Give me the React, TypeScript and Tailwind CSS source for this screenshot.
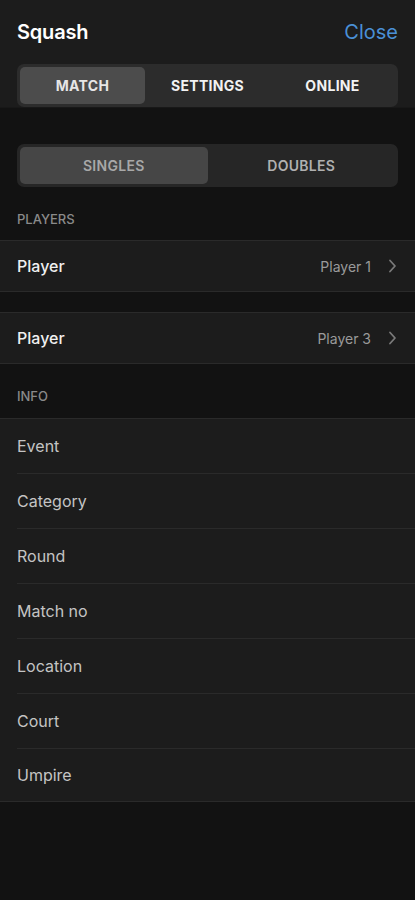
import React, { useState } from 'react';

const INFO_FIELDS = ['Event', 'Category', 'Round', 'Match no', 'Location', 'Court', 'Umpire'];

const Chevron: React.FC = () => (
  <svg width="9" height="14" viewBox="0 0 9 14" fill="none" stroke="#7a7a7a" strokeWidth="1.8" strokeLinecap="round" strokeLinejoin="round">
    <path d="M2 1.5l5 5.5-5 5.5" />
  </svg>
);

const App: React.FC = () => {
  const [tab, setTab] = useState('MATCH');
  const [mode, setMode] = useState('SINGLES');

  return (
    <div className="min-h-[900px] w-full bg-[#121212] font-['Inter','Liberation_Sans',sans-serif] text-white">
      <header className="bg-[#1c1c1c] px-[17px] pt-[17px] border-b border-[#181818]">
        <div className="flex items-center justify-between h-[29px]">
          <h1 className="text-[20px] font-semibold tracking-[-0.2px]">Squash</h1>
          <button className="text-[20px] text-[#4a90d6]">Close</button>
        </div>
        <div className="mt-[18px] h-[43px] rounded-[7px] bg-[#2c2c2c] p-[3px] grid grid-cols-3">
          {['MATCH', 'SETTINGS', 'ONLINE'].map((t) => (
            <button
              key={t}
              onClick={() => setTab(t)}
              className={`rounded-[5px] text-[14px] font-bold tracking-[0.3px] ${tab === t ? 'bg-[#4c4c4c] text-[#e6e6e6]' : 'text-[#f2f2f2]'}`}
            >
              {t}
            </button>
          ))}
        </div>
      </header>

      <main>
        <div className="px-[17px] pt-[36px]">
          <div className="h-[43px] rounded-[7px] bg-[#262626] p-[3px] grid grid-cols-2">
            {['SINGLES', 'DOUBLES'].map((m) => (
              <button
                key={m}
                onClick={() => setMode(m)}
                className={`rounded-[5px] text-[14px] font-semibold tracking-[0.3px] ${mode === m ? 'bg-[#464646] text-[#a8a8a8]' : 'text-[#b0b0b0]'}`}
              >
                {m}
              </button>
            ))}
          </div>
        </div>

        <div className="px-[17px] pt-[24px] pb-[12px] text-[13px] font-medium text-[#8a8a8a] leading-[17px]">PLAYERS</div>
        <div className="bg-[#1c1c1c] border-y border-[#2a2a2a] h-[52px] flex items-center pl-[17px] pr-[18px]">
          <span className="text-[16px] font-medium text-[#f0f0f0] flex-1">Player</span>
          <span className="text-[14px] text-[#9a9a9a] mr-[17px]">Player 1</span>
          <Chevron />
        </div>
        <div className="h-[20px]" />
        <div className="bg-[#1c1c1c] border-y border-[#2a2a2a] h-[52px] flex items-center pl-[17px] pr-[18px]">
          <span className="text-[16px] font-medium text-[#f0f0f0] flex-1">Player</span>
          <span className="text-[14px] text-[#9a9a9a] mr-[17px]">Player 3</span>
          <Chevron />
        </div>

        <div className="px-[17px] pt-[24px] pb-[13px] text-[13px] font-medium text-[#8a8a8a] leading-[17px]">INFO</div>
        <div className="bg-[#1c1c1c] border-y border-[#2a2a2a] pl-[17px]">
          {INFO_FIELDS.map((f, i) => (
            <div
              key={f}
              className={`flex items-center text-[16px] text-[#c4c4c4] ${i < INFO_FIELDS.length - 1 ? 'h-[55px] border-b border-[#2a2a2a]' : 'h-[52px]'}`}
            >
              {f}
            </div>
          ))}
        </div>
      </main>
    </div>
  );
};

export default App;
